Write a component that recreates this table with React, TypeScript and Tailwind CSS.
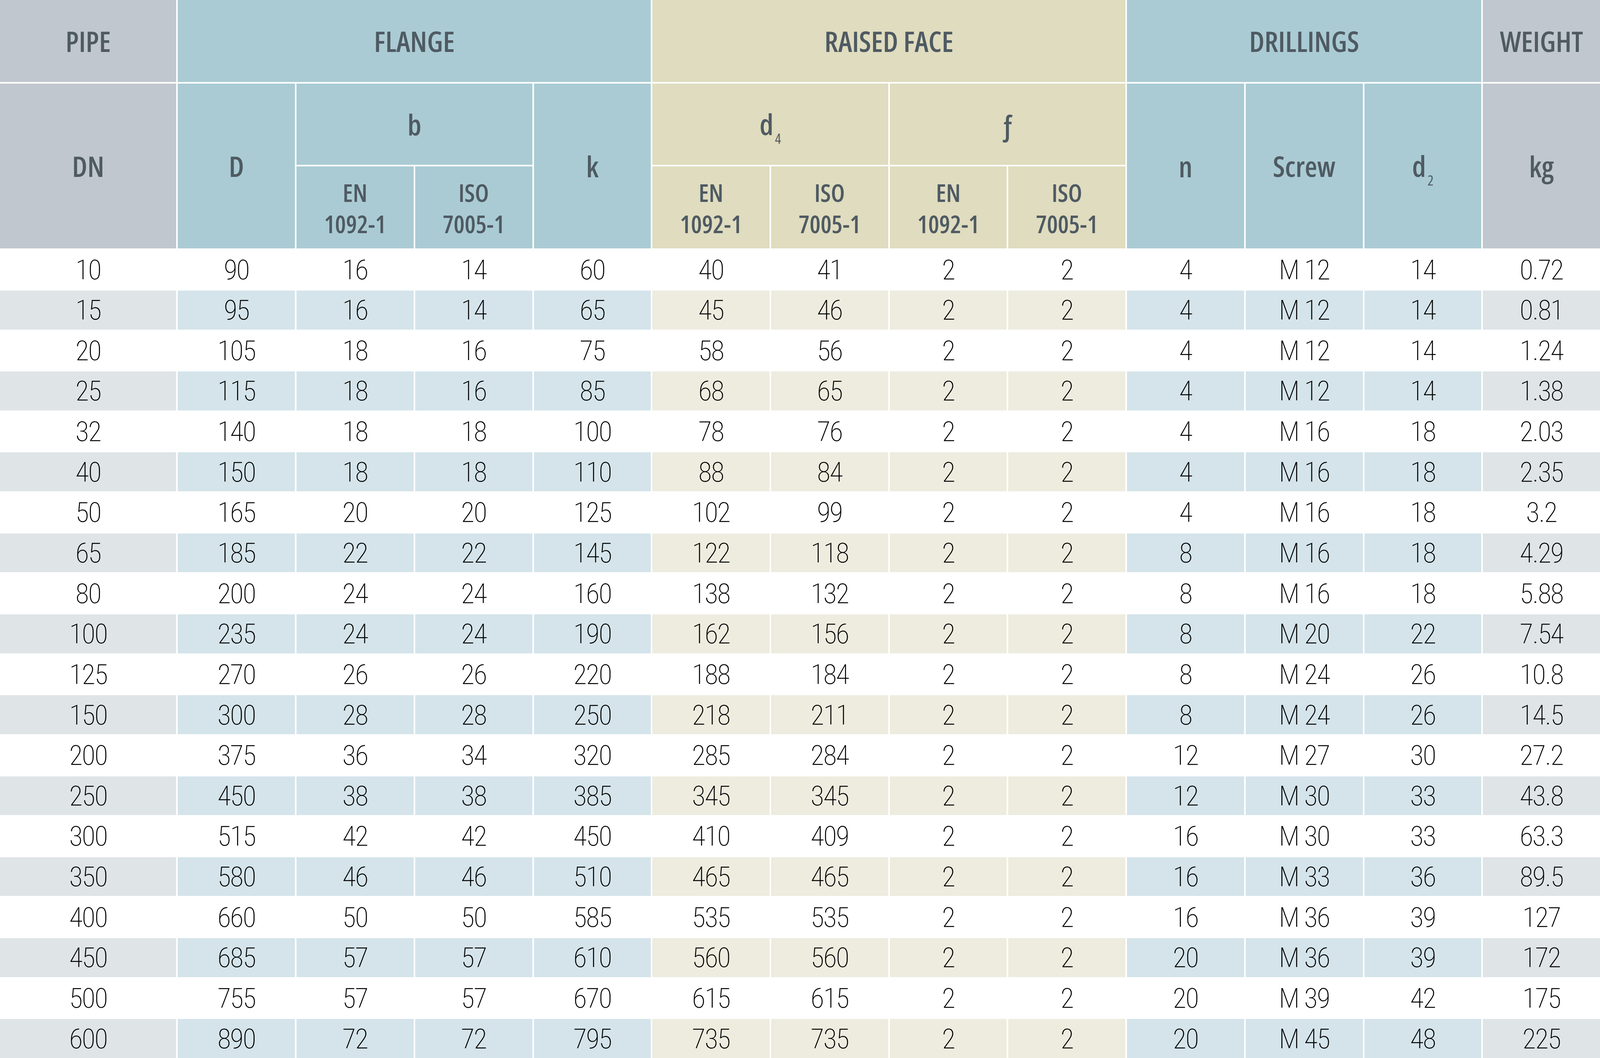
const rows: (string | number)[][] = [
  [10, 90, 16, 14, 60, 40, 41, 2, 2, 4, "M 12", 14, "0.72"],
  [15, 95, 16, 14, 65, 45, 46, 2, 2, 4, "M 12", 14, "0.81"],
  [20, 105, 18, 16, 75, 58, 56, 2, 2, 4, "M 12", 14, "1.24"],
  [25, 115, 18, 16, 85, 68, 65, 2, 2, 4, "M 12", 14, "1.38"],
  [32, 140, 18, 18, 100, 78, 76, 2, 2, 4, "M 16", 18, "2.03"],
  [40, 150, 18, 18, 110, 88, 84, 2, 2, 4, "M 16", 18, "2.35"],
  [50, 165, 20, 20, 125, 102, 99, 2, 2, 4, "M 16", 18, "3.2"],
  [65, 185, 22, 22, 145, 122, 118, 2, 2, 8, "M 16", 18, "4.29"],
  [80, 200, 24, 24, 160, 138, 132, 2, 2, 8, "M 16", 18, "5.88"],
  [100, 235, 24, 24, 190, 162, 156, 2, 2, 8, "M 20", 22, "7.54"],
  [125, 270, 26, 26, 220, 188, 184, 2, 2, 8, "M 24", 26, "10.8"],
  [150, 300, 28, 28, 250, 218, 211, 2, 2, 8, "M 24", 26, "14.5"],
  [200, 375, 36, 34, 320, 285, 284, 2, 2, 12, "M 27", 30, "27.2"],
  [250, 450, 38, 38, 385, 345, 345, 2, 2, 12, "M 30", 33, "43.8"],
  [300, 515, 42, 42, 450, 410, 409, 2, 2, 16, "M 30", 33, "63.3"],
  [350, 580, 46, 46, 510, 465, 465, 2, 2, 16, "M 33", 36, "89.5"],
  [400, 660, 50, 50, 585, 535, 535, 2, 2, 16, "M 36", 39, "127"],
  [450, 685, 57, 57, 610, 560, 560, 2, 2, 20, "M 36", 39, "172"],
  [500, 755, 57, 57, 670, 615, 615, 2, 2, 20, "M 39", 42, "175"],
  [600, 890, 72, 72, 795, 735, 735, 2, 2, 20, "M 45", 48, "225"],
];

// light tint of each column group for the striped rows
const stripe = [
  "bg-[#dfe4e7]",
  "bg-[#d4e4ea]",
  "bg-[#d4e4ea]",
  "bg-[#d4e4ea]",
  "bg-[#d4e4ea]",
  "bg-[#edecdf]",
  "bg-[#edecdf]",
  "bg-[#edecdf]",
  "bg-[#edecdf]",
  "bg-[#d4e4ea]",
  "bg-[#d4e4ea]",
  "bg-[#d4e4ea]",
  "bg-[#dfe4e7]",
];

const gray = "bg-[#c0c7ce]";
const blue = "bg-[#aacbd4]";
const sand = "bg-[#dfdcbf]";

function Head({
  children,
  className = "",
}: {
  children: React.ReactNode;
  className?: string;
}) {
  return (
    <div
      className={`flex items-center justify-center text-center text-[#4f5a62] font-semibold ${className}`}
    >
      {children}
    </div>
  );
}

function Sub({ main, sub }: { main: string; sub: string }) {
  return (
    <span className="leading-none">
      {main}
      <span className="text-[36px] font-medium leading-[0] align-[-22px] ml-[4px]">{sub}</span>
    </span>
  );
}

function Std({ name, num, bg }: { name: string; num: string; bg: string }) {
  return (
    <Head className={`${bg} flex-col text-[63px] leading-[80px] pt-[4px] [font-stretch:75%]`}>
      <span>{name}</span>
      <span>{num}</span>
    </Head>
  );
}

export default function App() {
  return (
    <div className="w-full h-screen overflow-hidden bg-white font-['Open_Sans',sans-serif]">
      <div className="grid h-full grid-cols-[482fr_repeat(12,320fr)] grid-rows-[210fr_208fr_210fr_repeat(20,99.6fr)] gap-[4px]">
        <Head className={`${gray} text-[73px] [font-stretch:78%]`}>PIPE</Head>
        <Head className={`${blue} col-span-4 text-[73px] [font-stretch:78%]`}>FLANGE</Head>
        <Head className={`${sand} col-span-4 text-[73px] [font-stretch:78%]`}>RAISED FACE</Head>
        <Head className={`${blue} col-span-3 text-[73px] [font-stretch:78%]`}>DRILLINGS</Head>
        <Head className={`${gray} text-[73px] [font-stretch:78%]`}>WEIGHT</Head>

        <Head className={`${gray} row-span-2 text-[73px] [font-stretch:78%]`}>DN</Head>
        <Head className={`${blue} row-span-2 text-[73px] [font-stretch:78%]`}>D</Head>
        <Head className={`${blue} col-span-2 text-[74px] [font-stretch:78%]`}>b</Head>
        <Head className={`${blue} row-span-2 text-[74px] [font-stretch:78%]`}>k</Head>
        <Head className={`${sand} col-span-2 text-[74px] [font-stretch:78%]`}>
          <Sub main="d" sub="4" />
        </Head>
        <Head className={`${sand} col-span-2 text-[74px] [font-stretch:78%]`}>ƒ</Head>
        <Head className={`${blue} row-span-2 text-[74px] [font-stretch:78%]`}>n</Head>
        <Head className={`${blue} row-span-2 text-[73px] [font-stretch:78%]`}>Screw</Head>
        <Head className={`${blue} row-span-2 text-[74px] [font-stretch:78%]`}>
          <Sub main="d" sub="2" />
        </Head>
        <Head className={`${gray} row-span-2 text-[74px] [font-stretch:78%]`}>kg</Head>

        <Std name="EN" num="1092-1" bg={blue} />
        <Std name="ISO" num="7005-1" bg={blue} />
        <Std name="EN" num="1092-1" bg={sand} />
        <Std name="ISO" num="7005-1" bg={sand} />
        <Std name="EN" num="1092-1" bg={sand} />
        <Std name="ISO" num="7005-1" bg={sand} />

        {rows.map((row, r) =>
          row.map((v, c) => (
            <div
              key={`${r}-${c}`}
              className={`flex items-center justify-center leading-none font-['Roboto_Condensed',sans-serif] font-extralight text-[71px] tracking-[-2px] text-black ${
                r % 2 === 1 ? stripe[c] : "bg-white"
              }`}
            >
              {v}
            </div>
          ))
        )}
      </div>
    </div>
  );
}
